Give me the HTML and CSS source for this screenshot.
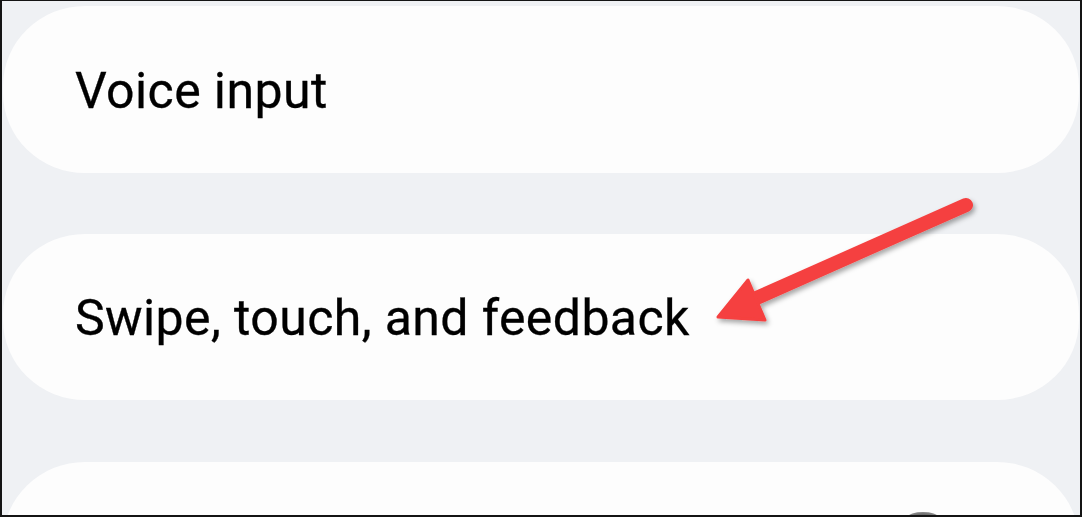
FILE: index.html
```html
<!DOCTYPE html>
<html lang="en">
<head>
<meta charset="utf-8">
<title>Keyboard settings</title>
<link rel="stylesheet" href="styles.css">
</head>
<body>
<div class="screen">
  <div class="list">
    <div class="card first"><span class="label">Voice input</span></div>
    <div class="card"><span class="label">Swipe, touch, and feedback</span></div>
    <div class="card"><span class="label"></span></div>
  </div>
  <div class="scroll-dot"></div>
  <svg class="arrow" width="1082" height="517" viewBox="0 0 1082 517">
    <defs>
      <filter id="sh" x="-10%" y="-10%" width="130%" height="130%">
        <feDropShadow dx="2" dy="3" stdDeviation="2.5" flood-color="#000" flood-opacity="0.35"/>
      </filter>
    </defs>
    <g filter="url(#sh)">
      <line x1="966" y1="205" x2="752" y2="300" stroke="#f5403f" stroke-width="14" stroke-linecap="round"/>
      <polygon points="718,317 748,280 765,320" fill="#f5403f" stroke="#f5403f" stroke-width="3" stroke-linejoin="round"/>
    </g>
  </svg>
</div>
</body>
</html>
```
FILE: styles.css
```css
html, body {
  margin: 0;
  padding: 0;
}
body {
  width: 1082px;
  height: 517px;
  overflow: hidden;
  font-family: Roboto, "Liberation Sans", sans-serif;
}
.screen {
  position: relative;
  box-sizing: border-box;
  width: 1082px;
  height: 517px;
  border-style: solid;
  border-color: #141414;
  border-width: 1px 2px 2px 2px;
  background: #eff1f4;
  overflow: hidden;
}
.list {
  display: flex;
  flex-direction: column;
  gap: 61px;
  padding: 5px 0 0 1px;
  width: 1076px;
}
.card {
  flex: none;
  height: 167px;
  background: #fdfdfd;
  border-radius: 82px / 80px;
  display: flex;
  align-items: center;
  padding-left: 72px;
}
.card + .card {
  height: 166px;
}
.card:last-child {
  margin-top: 1px;
  height: 167px;
}
.label {
  font-size: 50px;
  letter-spacing: 0.4px;
  color: #000;
  line-height: 1;
  position: relative;
  top: 1px;
  -webkit-text-stroke: 0.3px #000;
}
.scroll-dot {
  position: absolute;
  left: 906px;
  top: 511px;
  width: 30px;
  height: 10px;
  border-radius: 50%;
  background: radial-gradient(ellipse at center, #555 0%, #777 50%, #aaa 100%);
}
.arrow {
  position: absolute;
  left: -2px;
  top: -1px;
  pointer-events: none;
}
```
